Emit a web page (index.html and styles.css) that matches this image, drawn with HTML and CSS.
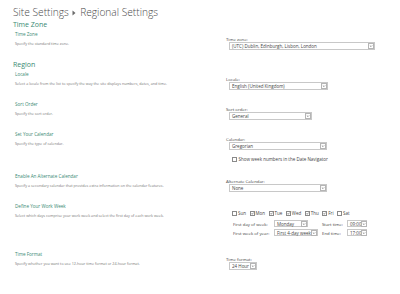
FILE: index.html
```html
<!DOCTYPE html>
<html>
<head>
<meta charset="utf-8">
<link rel="stylesheet" href="styles.css">
</head>
<body>
<div class="page">
  <h1 class="title">Site Settings <span class="sep"><svg viewBox="0 0 4 6" width="4" height="6"><path d="M0.5 0.5 L3.5 3 L0.5 5.5 Z" fill="#6b6b6b"/></svg></span> Regional Settings</h1>

  <h2 class="group">Time Zone</h2>
  <div class="row">
    <div class="left">
      <div class="sec">Time Zone</div>
      <div class="desc">Specify the standard time zone.</div>
    </div>
    <div class="right">
      <div class="label">Time zone:</div>
      <div class="select w-tz"><span>(UTC) Dublin, Edinburgh, Lisbon, London</span><i class="arrow"><svg viewBox="0 0 5 5" width="5" height="5"><path d="M1 1.8 L2.5 3.3 L4 1.8" fill="none" stroke="#666" stroke-width="0.8"/></svg></i></div>
    </div>
  </div>

  <h2 class="group">Region</h2>
  <div class="row">
    <div class="left">
      <div class="sec">Locale</div>
      <div class="desc">Select a locale from the list to specify the way the site displays numbers, dates, and time.</div>
    </div>
    <div class="right">
      <div class="label">Locale:</div>
      <div class="select w-locale"><span>English (United Kingdom)</span><i class="arrow"><svg viewBox="0 0 5 5" width="5" height="5"><path d="M1 1.8 L2.5 3.3 L4 1.8" fill="none" stroke="#666" stroke-width="0.8"/></svg></i></div>
    </div>
  </div>

  <div class="row">
    <div class="left">
      <div class="sec">Sort Order</div>
      <div class="desc">Specify the sort order.</div>
    </div>
    <div class="right">
      <div class="label">Sort order:</div>
      <div class="select w-sort"><span>General</span><i class="arrow"><svg viewBox="0 0 5 5" width="5" height="5"><path d="M1 1.8 L2.5 3.3 L4 1.8" fill="none" stroke="#666" stroke-width="0.8"/></svg></i></div>
    </div>
  </div>

  <div class="row">
    <div class="left">
      <div class="sec">Set Your Calendar</div>
      <div class="desc">Specify the type of calendar.</div>
    </div>
    <div class="right">
      <div class="label">Calendar:</div>
      <div class="select w-cal"><span>Gregorian</span><i class="arrow"><svg viewBox="0 0 5 5" width="5" height="5"><path d="M1 1.8 L2.5 3.3 L4 1.8" fill="none" stroke="#666" stroke-width="0.8"/></svg></i></div>
      <div class="check-line"><span class="cb"></span><span>Show week numbers in the Date Navigator</span></div>
    </div>
  </div>

  <div class="row">
    <div class="left">
      <div class="sec">Enable An Alternate Calendar</div>
      <div class="desc">Specify a secondary calendar that provides extra information on the calendar features.</div>
    </div>
    <div class="right">
      <div class="label">Alternate Calendar:</div>
      <div class="select w-cal"><span>None</span><i class="arrow"><svg viewBox="0 0 5 5" width="5" height="5"><path d="M1 1.8 L2.5 3.3 L4 1.8" fill="none" stroke="#666" stroke-width="0.8"/></svg></i></div>
    </div>
  </div>

  <div class="row">
    <div class="left">
      <div class="sec">Define Your Work Week</div>
      <div class="desc">Select which days comprise your work week and select the first day of each work week.</div>
    </div>
    <div class="right right-week">
      <div class="days">
        <span class="day"><span class="cb"></span>Sun</span>
        <span class="day"><span class="cb on"><svg viewBox="0 0 4 4" width="4" height="4"><path d="M0.6 2 L1.6 3 L3.4 0.8" fill="none" stroke="#444" stroke-width="0.8"/></svg></span>Mon</span>
        <span class="day"><span class="cb on"><svg viewBox="0 0 4 4" width="4" height="4"><path d="M0.6 2 L1.6 3 L3.4 0.8" fill="none" stroke="#444" stroke-width="0.8"/></svg></span>Tue</span>
        <span class="day"><span class="cb on"><svg viewBox="0 0 4 4" width="4" height="4"><path d="M0.6 2 L1.6 3 L3.4 0.8" fill="none" stroke="#444" stroke-width="0.8"/></svg></span>Wed</span>
        <span class="day"><span class="cb on"><svg viewBox="0 0 4 4" width="4" height="4"><path d="M0.6 2 L1.6 3 L3.4 0.8" fill="none" stroke="#444" stroke-width="0.8"/></svg></span>Thu</span>
        <span class="day"><span class="cb on"><svg viewBox="0 0 4 4" width="4" height="4"><path d="M0.6 2 L1.6 3 L3.4 0.8" fill="none" stroke="#444" stroke-width="0.8"/></svg></span>Fri</span>
        <span class="day"><span class="cb"></span>Sat</span>
      </div>
      <div class="week-grid">
        <span class="wl">First day of week:</span>
        <div class="select small w-day"><span>Monday</span><i class="arrow"><svg viewBox="0 0 5 5" width="5" height="5"><path d="M1 1.8 L2.5 3.3 L4 1.8" fill="none" stroke="#666" stroke-width="0.8"/></svg></i></div>
        <span class="wl">Start time:</span>
        <div class="select small w-time"><span>09:00</span><i class="arrow"><svg viewBox="0 0 5 5" width="5" height="5"><path d="M1 1.8 L2.5 3.3 L4 1.8" fill="none" stroke="#666" stroke-width="0.8"/></svg></i></div>
        <span class="wl">First week of year:</span>
        <div class="select small w-fw"><span>First 4-day week</span><i class="arrow"><svg viewBox="0 0 5 5" width="5" height="5"><path d="M1 1.8 L2.5 3.3 L4 1.8" fill="none" stroke="#666" stroke-width="0.8"/></svg></i></div>
        <span class="wl">End time:</span>
        <div class="select small w-time"><span>17:00</span><i class="arrow"><svg viewBox="0 0 5 5" width="5" height="5"><path d="M1 1.8 L2.5 3.3 L4 1.8" fill="none" stroke="#666" stroke-width="0.8"/></svg></i></div>
      </div>
    </div>
  </div>

  <div class="row">
    <div class="left">
      <div class="sec">Time Format</div>
      <div class="desc">Specify whether you want to use 12-hour time format or 24-hour format.</div>
    </div>
    <div class="right">
      <div class="label">Time format:</div>
      <div class="select w-tf"><span>24 Hour</span><i class="arrow"><svg viewBox="0 0 5 5" width="5" height="5"><path d="M1 1.8 L2.5 3.3 L4 1.8" fill="none" stroke="#666" stroke-width="0.8"/></svg></i></div>
    </div>
  </div>
</div>
</body>
</html>
```
FILE: styles.css
```css
html, body {
  margin: 0;
  padding: 0;
  background: #ffffff;
}

.page {
  padding: 4px 0 0 13px;
  font-family: "Open Sans", "Noto Sans", sans-serif;
  color: #444444;
}

.title {
  margin: 0;
  font-size: 10.2px;
  font-weight: 300;
  line-height: 16px;
  color: #4a4a4a;
  white-space: nowrap;
}

.sep {
  display: inline-block;
  vertical-align: middle;
  margin: 0 1px;
}
.sep svg { display: block; }

.group {
  margin: 0;
  font-size: 7px;
  font-weight: 400;
  line-height: 10px;
  color: #3a8a74;
}

.row {
  display: grid;
  grid-template-columns: 211px 1fr;
  padding: 0 0 10px 2px;
}

.left {
  display: flex;
  flex-direction: column;
  gap: 3px;
}

.sec {
  font-size: 4.6px;
  line-height: 8px;
  color: #3a8a74;
}

.desc {
  font-size: 3.7px;
  line-height: 5px;
  color: #777777;
  white-space: nowrap;
}

.right {
  padding-top: 6px;
  display: flex;
  flex-direction: column;
  align-items: flex-start;
}

.label {
  font-size: 4.3px;
  line-height: 6px;
  color: #444444;
}

.select {
  box-sizing: border-box;
  height: 8px;
  margin-left: 3px;
  border: 1px solid #c8c8c8;
  background: #ffffff;
  display: flex;
  align-items: center;
  justify-content: space-between;
  padding: 0 0 0 2px;
  font-size: 4.5px;
  color: #444444;
  white-space: nowrap;
}

.select .arrow {
  box-sizing: border-box;
  width: 6px;
  height: 6px;
  border: 1px solid #b5b5b5;
  display: flex;
  align-items: center;
  justify-content: center;
  flex: none;
}
.select .arrow svg { display: block; width: 4px; height: 4px; }

.select.small {
  height: 7px;
  margin-left: 0;
}

.w-tz { width: 146px; }
.w-locale { width: 99px; }
.w-sort { width: 83px; }
.w-cal { width: 98px; }
.w-tf { width: 28px; }
.w-day { width: 34px; }
.w-fw { width: 44px; }
.w-time { width: 20px; }

.check-line {
  margin: 6px 0 0 6px;
  display: flex;
  align-items: center;
  gap: 1.5px;
  font-size: 4.5px;
  line-height: 6px;
  color: #444444;
  white-space: nowrap;
}

.cb {
  box-sizing: border-box;
  width: 5px;
  height: 5px;
  border: 1px solid #8a8a8a;
  background: #ffffff;
  display: inline-flex;
  align-items: center;
  justify-content: center;
  flex: none;
}
.cb svg { display: block; width: 3px; height: 3px; }

.right-week {
  padding-top: 8px;
  padding-bottom: 3px;
}

.days {
  margin-left: 6px;
  display: flex;
  gap: 3.5px;
  font-size: 4.5px;
  line-height: 6px;
  color: #444444;
}

.day {
  display: inline-flex;
  align-items: center;
  gap: 1px;
}

.week-grid {
  margin: 3px 0 0 7px;
  display: grid;
  grid-template-columns: 41px 48px 25px auto;
  grid-auto-rows: 9px;
  align-items: center;
  font-size: 4.3px;
  color: #444444;
}

.wl { white-space: nowrap; }
```
